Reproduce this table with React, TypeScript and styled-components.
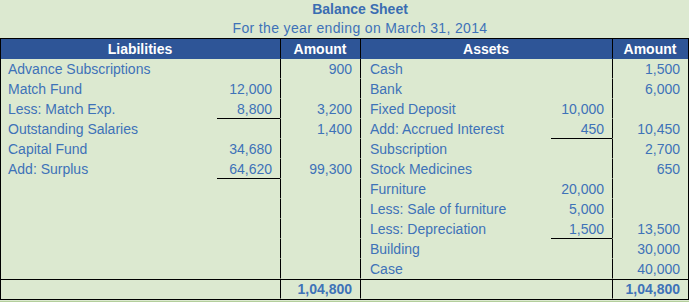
import React from 'react'
import styled, { createGlobalStyle } from 'styled-components'

const GlobalStyle = createGlobalStyle`
  html, body {
    margin: 0;
    padding: 0;
    background: #dce9d0;
  }
  body {
    font-family: 'Liberation Sans', Arial, sans-serif;
  }
`

const Page = styled.div`
  width: 689px;
  height: 302px;
  background: #dce9d0;
  border-bottom: 1px solid #b4cf9c;
  box-sizing: border-box;
  color: #3e72b8;
  font-size: 14px;
`

const Title = styled.div`
  height: 19px;
  line-height: 19px;
  padding-left: 31px;
  text-align: center;
  font-weight: bold;
  color: #3a6db2;
`

const SubTitle = styled.div`
  height: 19px;
  line-height: 19px;
  padding-left: 31px;
  text-align: center;
  letter-spacing: 0.35px;
`

const Table = styled.div`
  border: 1px solid #000;
  width: 689px;
  box-sizing: border-box;
`

const Row = styled.div<{ $head?: boolean; $total?: boolean }>`
  display: grid;
  grid-template-columns: 216px 63px 80px 191px 61px 76px;
  height: 20px;
  background: ${({ $head }) => ($head ? '#2e5597' : 'transparent')};
  color: ${({ $head }) => ($head ? '#fff' : 'inherit')};
  font-weight: ${({ $head, $total }) => ($head || $total ? 'bold' : 'normal')};
  border-top: ${({ $total }) => ($total ? '1px solid #000' : 'none')};
  box-sizing: border-box;
`

const Cell = styled.div<{ $span?: number; $line?: boolean; $right?: boolean; $under?: boolean; $center?: boolean; $wide?: boolean }>`
  grid-column: span ${({ $span }) => $span || 1};
  border-left: ${({ $line }) => ($line ? '1px solid #000' : 'none')};
  border-bottom: ${({ $under }) => ($under ? '1px solid #000' : '1px solid transparent')};
  display: flex;
  align-items: center;
  justify-content: ${({ $right, $center }) => ($center ? 'center' : $right ? 'flex-end' : 'flex-start')};
  padding: 0 8px 0 ${({ $wide }) => ($wide ? '9px' : '7px')};
  box-sizing: border-box;
  white-space: nowrap;
  height: 100%;
`

type Line = {
  l?: string
  la?: string
  lb?: string
  lu?: boolean
  r?: string
  ra?: string
  rb?: string
  ru?: boolean
}

const rows: Line[] = [
  { l: 'Advance Subscriptions', lb: '900', r: 'Cash', rb: '1,500' },
  { l: 'Match Fund', la: '12,000', r: 'Bank', rb: '6,000' },
  { l: 'Less: Match Exp.', la: '8,800', lu: true, lb: '3,200', r: 'Fixed Deposit', ra: '10,000' },
  { l: 'Outstanding Salaries', lb: '1,400', r: 'Add: Accrued Interest', ra: '450', ru: true, rb: '10,450' },
  { l: 'Capital Fund', la: '34,680', r: 'Subscription', rb: '2,700' },
  { l: 'Add: Surplus', la: '64,620', lu: true, lb: '99,300', r: 'Stock Medicines', rb: '650' },
  { r: 'Furniture', ra: '20,000' },
  { r: 'Less: Sale of furniture', ra: '5,000' },
  { r: 'Less: Depreciation', ra: '1,500', ru: true, rb: '13,500' },
  { r: 'Building', rb: '30,000' },
  { r: 'Case', rb: '40,000' },
]

export default function App() {
  return (
    <>
      <GlobalStyle />
      <Page>
        <Title>Balance Sheet</Title>
        <SubTitle>For the year ending on March 31, 2014</SubTitle>
        <Table>
          <Row $head>
            <Cell $span={2} $center>Liabilities</Cell>
            <Cell $line $center>Amount</Cell>
            <Cell $span={2} $line $center>Assets</Cell>
            <Cell $line $center>Amount</Cell>
          </Row>
          {rows.map((r, i) => (
            <Row key={i}>
              <Cell>{r.l}</Cell>
              <Cell $right $under={r.lu}>{r.la}</Cell>
              <Cell $line $right>{r.lb}</Cell>
              <Cell $line $wide>{r.r}</Cell>
              <Cell $right $under={r.ru}>{r.ra}</Cell>
              <Cell $line $right>{r.rb}</Cell>
            </Row>
          ))}
          <Row $total>
            <Cell />
            <Cell />
            <Cell $line $right>1,04,800</Cell>
            <Cell $line />
            <Cell />
            <Cell $line $right>1,04,800</Cell>
          </Row>
        </Table>
      </Page>
    </>
  )
}
